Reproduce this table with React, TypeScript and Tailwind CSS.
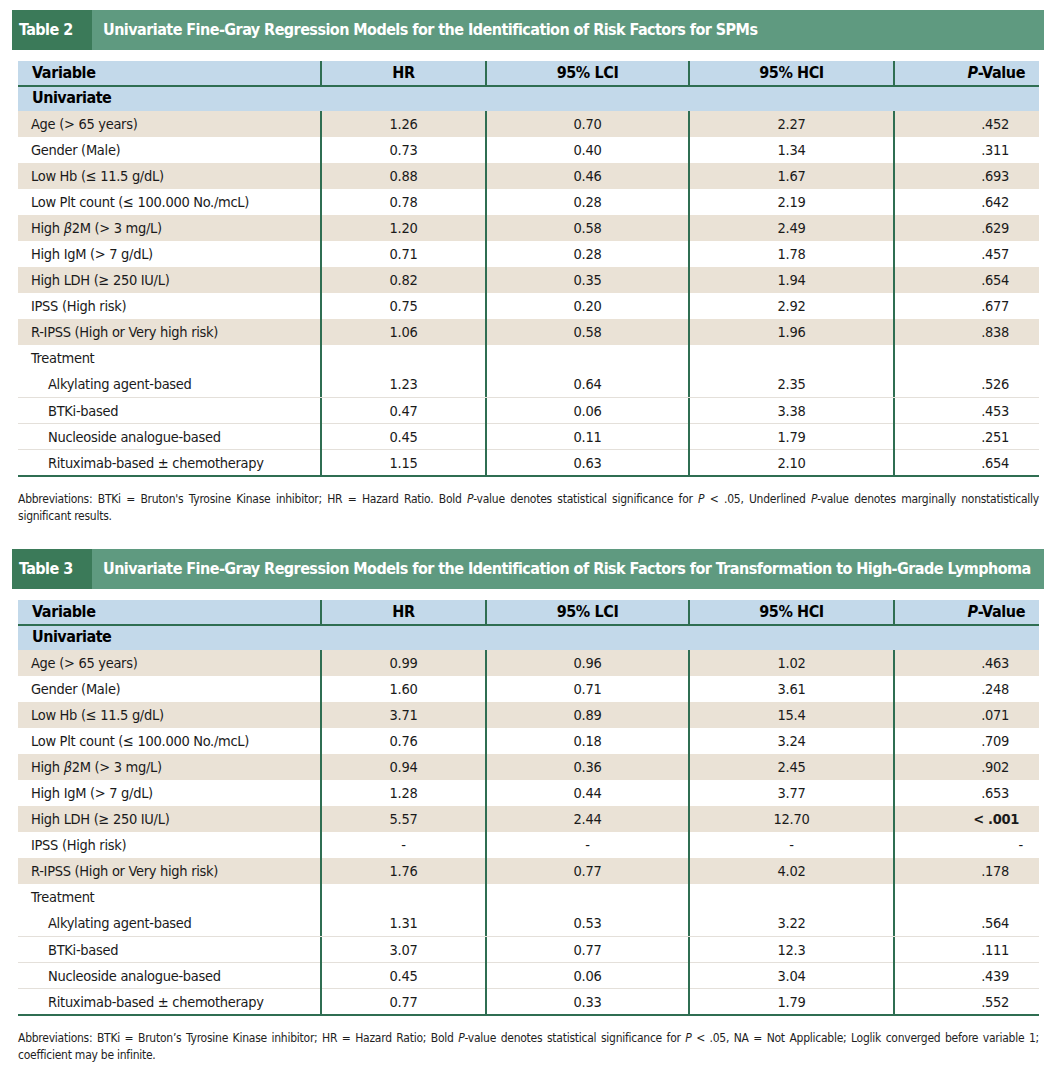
import React from "react";

type Row = {
  label: React.ReactNode;
  hr: string;
  lci: string;
  hci: string;
  p: React.ReactNode;
  shade?: boolean;
  sub?: boolean;
  blank?: boolean;
};

const geq = "\u2265";
const leq = "\u2264";

const beta = <span className="italic">β</span>;

const TABLE2: Row[] = [
  { label: "Age (> 65 years)", hr: "1.26", lci: "0.70", hci: "2.27", p: ".452", shade: true },
  { label: "Gender (Male)", hr: "0.73", lci: "0.40", hci: "1.34", p: ".311" },
  { label: `Low Hb (${leq} 11.5 g/dL)`, hr: "0.88", lci: "0.46", hci: "1.67", p: ".693", shade: true },
  { label: `Low Plt count (${leq} 100.000 No./mcL)`, hr: "0.78", lci: "0.28", hci: "2.19", p: ".642" },
  { label: <>High {beta}2M (&gt; 3 mg/L)</>, hr: "1.20", lci: "0.58", hci: "2.49", p: ".629", shade: true },
  { label: "High IgM (> 7 g/dL)", hr: "0.71", lci: "0.28", hci: "1.78", p: ".457" },
  { label: `High LDH (${geq} 250 IU/L)`, hr: "0.82", lci: "0.35", hci: "1.94", p: ".654", shade: true },
  { label: "IPSS (High risk)", hr: "0.75", lci: "0.20", hci: "2.92", p: ".677" },
  { label: "R-IPSS (High or Very high risk)", hr: "1.06", lci: "0.58", hci: "1.96", p: ".838", shade: true },
  { label: "Treatment", hr: "", lci: "", hci: "", p: "", blank: true },
  { label: "Alkylating agent-based", hr: "1.23", lci: "0.64", hci: "2.35", p: ".526", sub: true },
  { label: "BTKi-based", hr: "0.47", lci: "0.06", hci: "3.38", p: ".453", sub: true },
  { label: "Nucleoside analogue-based", hr: "0.45", lci: "0.11", hci: "1.79", p: ".251", sub: true },
  { label: "Rituximab-based \u00b1 chemotherapy", hr: "1.15", lci: "0.63", hci: "2.10", p: ".654", sub: true },
];

const TABLE3: Row[] = [
  { label: "Age (> 65 years)", hr: "0.99", lci: "0.96", hci: "1.02", p: ".463", shade: true },
  { label: "Gender (Male)", hr: "1.60", lci: "0.71", hci: "3.61", p: ".248" },
  { label: `Low Hb (${leq} 11.5 g/dL)`, hr: "3.71", lci: "0.89", hci: "15.4", p: ".071", shade: true },
  { label: `Low Plt count (${leq} 100.000 No./mcL)`, hr: "0.76", lci: "0.18", hci: "3.24", p: ".709" },
  { label: <>High {beta}2M (&gt; 3 mg/L)</>, hr: "0.94", lci: "0.36", hci: "2.45", p: ".902", shade: true },
  { label: "High IgM (> 7 g/dL)", hr: "1.28", lci: "0.44", hci: "3.77", p: ".653" },
  {
    label: `High LDH (${geq} 250 IU/L)`,
    hr: "5.57",
    lci: "2.44",
    hci: "12.70",
    p: <span className="-mr-[10px] font-bold">&lt; .001</span>,
    shade: true,
  },
  { label: "IPSS (High risk)", hr: "-", lci: "-", hci: "-", p: <span className="-mr-[14px]">-</span> },
  { label: "R-IPSS (High or Very high risk)", hr: "1.76", lci: "0.77", hci: "4.02", p: ".178", shade: true },
  { label: "Treatment", hr: "", lci: "", hci: "", p: "", blank: true },
  { label: "Alkylating agent-based", hr: "1.31", lci: "0.53", hci: "3.22", p: ".564", sub: true },
  { label: "BTKi-based", hr: "3.07", lci: "0.77", hci: "12.3", p: ".111", sub: true },
  { label: "Nucleoside analogue-based", hr: "0.45", lci: "0.06", hci: "3.04", p: ".439", sub: true },
  { label: "Rituximab-based \u00b1 chemotherapy", hr: "0.77", lci: "0.33", hci: "1.79", p: ".552", sub: true },
];

const COLS = "grid grid-cols-[302px_165px_203px_205px_146px]";
const DIV = "border-l-2 border-[#2f6e52]";

function TitleBar({ num, title }: { num: string; title: string }) {
  return (
    <div className="flex h-[40px] w-[1032px] items-stretch whitespace-nowrap text-white font-bold text-[16px] tracking-[-0.55px]">
      <div className="flex w-[80px] shrink-0 items-center bg-[#3b7a59] pl-[7px]">Table {num}</div>
      <div className="flex min-w-0 flex-1 items-center overflow-hidden bg-[#5f9a80] pl-[11px]">{title}</div>
    </div>
  );
}

function DataTable({ rows }: { rows: Row[] }) {
  return (
    <div className="ml-[6px] mt-[11px] w-[1021px] border-b-2 border-[#2f6e52]">
      {/* Header */}
      <div className={`${COLS} h-[26px] bg-[#c3d9ea] border-b-2 border-[#2f6e52] font-bold text-[16px] tracking-[-0.4px] leading-[24px] text-black`}>
        <div className="pl-[14px]">Variable</div>
        <div className={`${DIV} text-center`}>HR</div>
        <div className={`${DIV} text-center`}>95% LCI</div>
        <div className={`${DIV} text-center`}>95% HCI</div>
        <div className={`${DIV} text-right pr-[14px]`}>
          <span className="italic">P</span>-Value
        </div>
      </div>
      <div className="h-[24px] bg-[#c3d9ea] pl-[14px] font-bold text-[16px] tracking-[-0.5px] leading-[22px] text-black">
        Univariate
      </div>
      {rows.map((r, i) => (
        <div
          key={i}
          className={`${COLS} h-[26px] text-[14.5px] tracking-[-0.3px] leading-[26px] text-[#1a1a1a] ${
            r.shade ? "bg-[#eae2d6]" : "bg-white"
          } ${r.sub && !rows[i - 1]?.blank ? "border-t border-[#e4e0da]" : ""}`}
        >
          <div className={r.sub ? "pl-[30px]" : "pl-[13px]"}>{r.label}</div>
          <div className={`${DIV} text-center`}>{r.hr}</div>
          <div className={`${DIV} text-center`}>{r.lci}</div>
          <div className={`${DIV} text-center`}>{r.hci}</div>
          <div className={`${DIV} text-right pr-[30px]`}>{r.p}</div>
        </div>
      ))}
    </div>
  );
}

function Note({ children }: { children: React.ReactNode }) {
  return (
    <p className="ml-[6px] mt-[14px] w-[1021px] text-justify text-[12px] tracking-[-0.25px] leading-[17px] text-[#1e1e1e]">
      {children}
    </p>
  );
}

export default function App() {
  return (
    <div
      className="min-h-[1082px] w-[1064px] bg-white pl-[12px] pt-[10px]"
      style={{ fontFamily: '"Liberation Sans Narrow", "DejaVu Sans Condensed", "Liberation Sans", sans-serif' }}
    >
      <TitleBar num="2" title="Univariate Fine-Gray Regression Models for the Identification of Risk Factors for SPMs" />
      <DataTable rows={TABLE2} />
      <Note>
        Abbreviations: BTKi = Bruton's Tyrosine Kinase inhibitor; HR = Hazard Ratio. Bold <span className="italic">P</span>-value
        denotes statistical significance for <span className="italic">P</span> &lt; .05, Underlined{" "}
        <span className="italic">P</span>-value denotes marginally nonstatistically significant results.
      </Note>

      <div className="mt-[24px]">
        <TitleBar
          num="3"
          title="Univariate Fine-Gray Regression Models for the Identification of Risk Factors for Transformation to High-Grade Lymphoma"
        />
      </div>
      <DataTable rows={TABLE3} />
      <Note>
        Abbreviations: BTKi = Bruton’s Tyrosine Kinase inhibitor; HR = Hazard Ratio; Bold <span className="italic">P</span>-value
        denotes statistical significance for <span className="italic">P</span> &lt; .05, NA = Not Applicable; Loglik converged before
        variable 1; coefficient may be infinite.
      </Note>
    </div>
  );
}
